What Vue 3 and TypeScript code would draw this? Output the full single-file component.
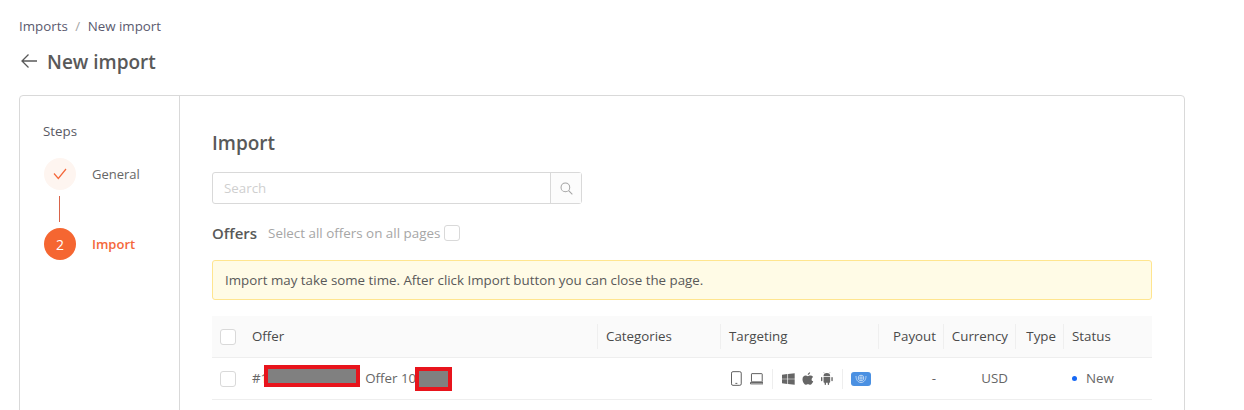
<script setup lang="ts">
const columns: { label: string; cls: string }[] = [
  { label: 'Offer', cls: 'left' },
  { label: 'Categories', cls: 'left' },
  { label: 'Targeting', cls: 'left' },
  { label: 'Payout', cls: 'right' },
  { label: 'Currency', cls: 'right' },
  { label: 'Type', cls: 'right' },
  { label: 'Status', cls: 'left' },
]
</script>

<template>
  <div class="page">
    <nav class="crumbs">
      <span>Imports</span><span class="sep">/</span><span>New import</span>
    </nav>
    <header class="title">
      <svg class="back" width="18" height="16" viewBox="0 0 18 16" fill="none" stroke="#595959" stroke-width="1.3">
        <path d="M17 8H2M8.5 1.5 2 8l6.500 6.500" />
      </svg>
      <h1>New import</h1>
    </header>

    <section class="card">
      <aside class="side">
        <div class="steps-label">Steps</div>
        <div class="step">
          <div class="dot done">
            <svg width="14" height="12" viewBox="0 0 14 12" fill="none" stroke="#f4673a" stroke-width="1.200">
              <path d="M1 5.500 5.300 10.500 13 1" />
            </svg>
          </div>
          <span class="step-name">General</span>
        </div>
        <div class="connector"></div>
        <div class="step">
          <div class="dot active">2</div>
          <span class="step-name current">Import</span>
        </div>
      </aside>

      <main class="main">
        <h2>Import</h2>
        <div class="search">
          <div class="search-input">Search</div>
          <div class="search-btn">
            <svg width="13" height="13" viewBox="0 0 14 14" fill="none" stroke="#a3a3a3" stroke-width="1.100">
              <circle cx="5.800" cy="5.800" r="4.700" />
              <path d="M9.300 9.300 13.300 13.300" />
            </svg>
          </div>
        </div>
        <div class="offers">
          <span class="offers-title">Offers</span>
          <span class="offers-hint">Select all offers on all pages</span>
          <span class="check"></span>
        </div>
        <div class="alert">Import may take some time. After click Import button you can close the page.</div>

        <div class="table">
          <div class="row head">
            <div class="cell select"><span class="check"></span></div>
            <div
              v-for="(col, i) in columns"
              :key="col.label"
              class="cell"
              :class="[col.cls, { divided: i < columns.length - 1 }]"
            >{{ col.label }}</div>
          </div>
          <div class="row body">
            <div class="cell select"><span class="check"></span></div>
            <div class="cell left offer">
              <span>#1</span>
              <span class="mask m1"></span>
              <span class="offer-name">Offer 10</span>
              <span class="mask m2"></span>
            </div>
            <div class="cell left"></div>
            <div class="cell left targeting">
              <svg width="11" height="15" viewBox="0 0 11 15" fill="none" stroke="#5c5c5c" stroke-width="1">
                <rect x=".5" y=".5" width="10" height="14" rx="1.500" />
                <path d="M4.500 12.500h2" />
              </svg>
              <svg class="laptop" width="14" height="12" viewBox="0 0 14 12" fill="none" stroke="#5c5c5c" stroke-width="1">
                <rect x="1.500" y=".5" width="11" height="8.500" rx=".5" />
                <path d="M.5 9.500h13v1.500H.5z" />
              </svg>
              <span class="vline"></span>
              <svg width="13" height="12" viewBox="0 0 13 12" fill="#666">
                <path d="M0 1.700 5.500.9v4.800H0zM6.200.8 13 0v5.700H6.200zM0 6.300h5.500v4.800L0 10.300zM6.200 6.300H13V12l-6.800-.9z" />
              </svg>
              <svg class="apple" width="12" height="13" viewBox="0 0 12 13" fill="#666">
                <path d="M8.300 0c.1 1.300-1 2.700-2.500 2.700C5.700 1.400 7 .1 8.300 0zM11.500 9.200c-.6 1.500-1.800 3.600-3.100 3.600-.9 0-1.200-.5-2.300-.5s-1.500.5-2.300.5C2.300 12.800.5 10 .5 7.300c0-2.500 1.600-3.800 3.100-3.800 1 0 1.800.6 2.400.6s1.500-.7 2.700-.6c.5 0 1.900.2 2.700 1.400-2.200 1.400-1.900 4.400.1 4.300z" />
              </svg>
              <svg class="android" width="12" height="13" viewBox="0 0 12 13" fill="#666">
                <path d="M2.600 4.300a3.400 3.400 0 0 1 6.800 0zM2.600 4.900h6.800v5.300c0 .4-.3.700-.7.700H8.300v1.500a.7.700 0 0 1-1.400 0v-1.500H5.100v1.500a.7.700 0 0 1-1.400 0v-1.500h-.4a.7.700 0 0 1-.7-.7zM.7 4.900c.4 0 .7.300.7.700v3a.7.700 0 0 1-1.400 0v-3c0-.4.300-.7.700-.7zM11.300 4.900c.4 0 .7.300.7.700v3a.7.700 0 0 1-1.400 0v-3c0-.4.300-.7.700-.7z" />
                <path d="M3.500 1.100 2.800.2M8.500 1.100l.7-.9" stroke="#666" stroke-width=".6" />
              </svg>
              <span class="vline"></span>
              <span class="globe">
                <svg width="12" height="9" viewBox="0 0 12 9" fill="none" stroke="#cfe2f7" stroke-width=".8">
                  <circle cx="6" cy="4" r="2.800" />
                  <path d="M3.200 4h5.600M6 1.200v5.600M1 2c0 3.800 2 6.500 5 6.500s5-2.700 5-6.500" />
                </svg>
              </span>
            </div>
            <div class="cell right"><span class="txt">-</span></div>
            <div class="cell right"><span class="txt">USD</span></div>
            <div class="cell right"></div>
            <div class="cell left status"><i class="status-dot"></i><span class="txt">New</span></div>
          </div>
        </div>
      </main>
    </section>
  </div>
</template>

<style>
html, body { margin: 0; background: #fff; overflow: hidden; }
</style>

<style scoped>
.page {
  height: 410px;
  overflow: hidden;
  box-sizing: border-box;
  padding: 16px 59px 0 19px;
  font-family: "Open Sans", "Noto Sans", sans-serif;
  font-size: 13.33px;
  color: #595959;
  background: #fff;
}
.crumbs {
  display: flex;
  align-items: center;
  height: 20px;
  color: #5a5a6e;
}
.sep { margin: 0 7.5px; color: #a6a6a6; }
.title {
  display: flex;
  align-items: center;
  gap: 9px;
  margin-top: 12px;
  height: 28px;
}
.back { margin-top: -3px; margin-left: 1px; }
h1 {
  margin: 0;
  font-size: 19px;
  line-height: 28px;
  font-weight: 600;
  color: #595959;
}
.card {
  display: flex;
  margin-top: 19px;
  height: 341px;
  box-sizing: border-box;
  border: 1px solid #d9d9d9;
  border-radius: 4px;
}
.side {
  width: 160px;
  flex: none;
  box-sizing: border-box;
  border-right: 1px solid #d9d9d9;
  padding: 25px 0 0 24px;
}
.steps-label { line-height: 20px; color: #5a5a64; margin-bottom: 17px; margin-left: -1px; }
.step {
  display: flex;
  align-items: center;
  gap: 16px;
  height: 32px;
}
.dot {
  width: 32px;
  height: 32px;
  border-radius: 50%;
  display: flex;
  align-items: center;
  justify-content: center;
  flex: none;
}
.dot.done { background: #fef5f0; }
.dot.active { background: #f56631; color: #fff; font-size: 14px; }
.step-name { color: #666; font-size: 13px; }
.step-name.current { color: #f4673a; font-weight: 600; }
.connector {
  width: 1px;
  height: 26px;
  margin: 6px 0 6px 15px;
  background: #d9644a;
}
.main {
  flex: 1;
  min-width: 0;
  padding: 32px 32px 0;
}
h2 {
  margin: 0;
  font-size: 19px;
  line-height: 30px;
  font-weight: 600;
  color: #595959;
}
.search {
  display: flex;
  width: 370px;
  height: 32px;
  margin-top: 14px;
  box-sizing: border-box;
  border: 1px solid #d9d9d9;
  border-radius: 3px;
}
.search-input {
  flex: 1;
  padding-left: 11px;
  line-height: 30px;
  color: #cfcfcf;
}
.search-btn {
  width: 30px;
  display: flex;
  align-items: center;
  justify-content: center;
  border-left: 1px solid #d9d9d9;
  background: #fcfcfc;
}
.offers {
  display: flex;
  align-items: center;
  height: 20px;
  margin-top: 19px;
}
.offers-title { font-size: 15px; font-weight: 600; color: #595959; }
.offers-hint { margin-left: 11px; margin-right: 4px; color: #a6a6a6; font-size: 13.4px; }
.check {
  display: block;
  width: 16px;
  height: 16px;
  box-sizing: border-box;
  border: 1px solid #d9d9d9;
  border-radius: 3px;
  background: #fff;
}
.alert {
  box-sizing: border-box;
  height: 40px;
  margin-top: 17px;
  padding-left: 12px;
  line-height: 38px;
  border: 1px solid #ffe58f;
  border-radius: 3px;
  background: #fffbe6;
  color: #595959;
}
.table { margin-top: 16px; }
.row {
  display: grid;
  grid-template-columns: 32px 354px 123px 158px 65px 72px 48px 88px;
  height: 42px;
  box-sizing: border-box;
  border-bottom: 1px solid #eeeeee;
}
.head {
  background: #fafafa;
  font-weight: 500;
  color: #4a4a4a;
}
.head .cell:not(.select) { padding-bottom: 2px; }
.cell {
  position: relative;
  display: flex;
  align-items: center;
  box-sizing: border-box;
  padding: 0 8px;
  white-space: nowrap;
}
.cell.right { justify-content: flex-end; }
.cell.select { padding: 0; justify-content: flex-end; padding-right: 8px; }
.cell.divided::before {
  content: "";
  position: absolute;
  right: 0;
  top: 8px;
  bottom: 8px;
  width: 1px;
  background: #efefef;
}
.body { color: #666; }
.txt { margin-bottom: 2px; }
.offer { overflow: hidden; }
.offer span:first-child, .offer-name { margin-bottom: 2px; }
.mask {
  flex: none;
  box-sizing: border-box;
  background: #808080;
  border: 4px solid #e8141c;
}
.m1 { width: 96px; height: 22px; margin-left: -4px; margin-bottom: 5px; }
.m2 { width: 37px; height: 24px; margin-left: -1px; }
.offer-name { margin-left: 5px; }
.targeting { padding-left: 10px; }
.laptop { margin-left: 8px; }
.vline {
  width: 1px;
  height: 20px;
  background: #eeeeee;
  margin: 0 9px;
}
.apple { margin-left: 7px; }
.android { margin-left: 7px; }
.globe {
  display: flex;
  align-items: center;
  justify-content: center;
  width: 20px;
  height: 14px;
  border-radius: 3px;
  background: #4a90e2;
}
.status { padding-left: 8px; }
.status-dot {
  width: 5px;
  height: 5px;
  border-radius: 50%;
  background: #1668f5;
  margin-right: 9px;
}
</style>
